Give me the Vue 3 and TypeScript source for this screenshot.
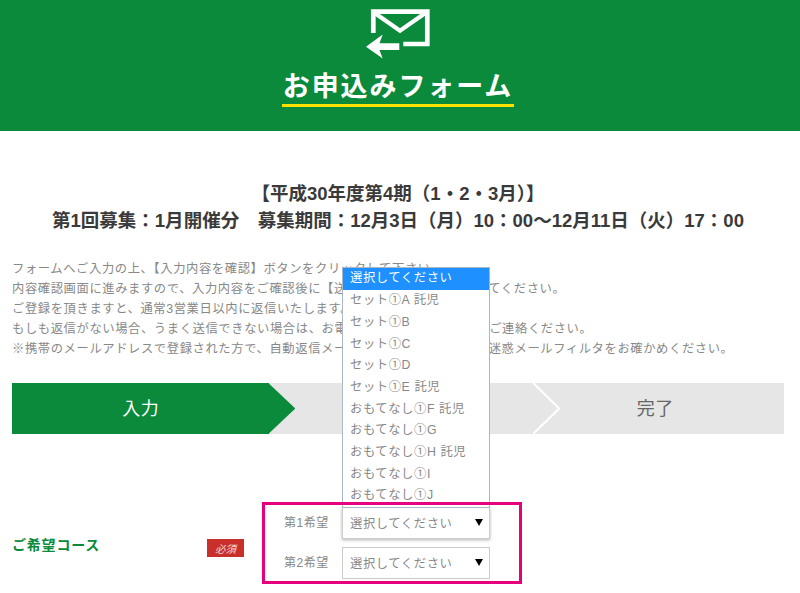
<script setup lang="ts">
const lines: string[] = [
  'フォームへご入力の上、【入力内容を確認】ボタンをクリックして下さい。',
  '内容確認画面に進みますので、入力内容をご確認後に【送信】ボタンをクリックしてください。',
  'ご登録を頂きますと、通常3営業日以内に返信いたします。',
  'もしも返信がない場合、うまく送信できない場合は、お電話またはメールなどにてご連絡ください。',
  '※携帯のメールアドレスで登録された方で、自動返信メールが届かない場合には、迷惑メールフィルタをお確かめください。',
]
const steps: string[] = ['入力', '確認', '完了']
const options: string[] = [
  '選択してください',
  'セット①A 託児',
  'セット①B',
  'セット①C',
  'セット①D',
  'セット①E 託児',
  'おもてなし①F 託児',
  'おもてなし①G',
  'おもてなし①H 託児',
  'おもてなし①I',
  'おもてなし①J',
]
</script>

<template>
  <div class="page">
    <header class="hero">
      <svg class="mail" viewBox="0 0 70 52" width="70" height="52" aria-hidden="true">
        <polyline points="8.3,25 8.3,3.7 62.3,3.7 62.3,36 38.3,36" fill="none" stroke="#fff" stroke-width="4.7" />
        <polyline points="10,5.3 35,22.7 60,5.3" fill="none" stroke="#fff" stroke-width="4.2" />
        <polygon points="1,38.7 17.7,26.5 14.5,35.3 34.3,35.3 34.3,42 14.5,42 17.7,50.5" fill="#fff" />
      </svg>
      <h1 class="hero-title">お申込みフォーム</h1>
    </header>

    <section class="notice">
      <p>【平成30年度第4期（1・2・3月）】</p>
      <p>第1回募集：1月開催分　募集期間：12月3日（月）10：00～12月11日（火）17：00</p>
    </section>

    <section class="intro">
      <p v-for="line in lines" :key="line">{{ line }}</p>
    </section>

    <ol class="steps">
      <li v-for="(step, i) in steps" :key="step" class="step" :class="{ active: i === 0, middle: i === 1 }">{{ step }}</li>
    </ol>

    <div class="form-row">
      <div class="course">ご希望コース</div>
      <span class="required">必須</span>
      <div class="choices">
        <div class="choice">
          <span class="choice-label">第1希望</span>
          <div class="select focused">
            <span>選択してください</span><i class="arrow"></i>
            <ul class="menu">
              <li v-for="(opt, i) in options" :key="opt" :class="{ selected: i === 0 }">{{ opt }}</li>
            </ul>
          </div>
        </div>
        <div class="choice">
          <span class="choice-label">第2希望</span>
          <div class="select">
            <span>選択してください</span><i class="arrow"></i>
          </div>
        </div>
      </div>
    </div>
  </div>
</template>

<style>
html, body { margin: 0; background: #fff; overflow: hidden; }
</style>

<style scoped>
.page {
  width: 800px;
  height: 593px;
  overflow: hidden;
  font-family: "Liberation Sans", "Noto Sans CJK JP", sans-serif;
  color: #888;
}
p, h1, ol, ul { margin: 0; padding: 0; list-style: none; }

.hero {
  height: 131px;
  box-sizing: border-box;
  padding-top: 8px;
  background: #0a8a3a;
  display: flex;
  flex-direction: column;
  align-items: center;
}
.mail { display: block; flex: none; }
.hero-title {
  margin: 7px 4px 0 0;
  padding: 0 1px;
  height: 37px;
  line-height: 41px;
  border-bottom: 3px solid #ffe100;
  color: #fff;
  font-size: 27px;
  font-weight: 700;
  letter-spacing: 1.9px;
  white-space: nowrap;
}

.notice {
  margin-top: 49px;
  padding-right: 4px;
  text-align: center;
  font-size: 18.5px;
  font-weight: 700;
  line-height: 27px;
  color: #3a3a3a;
}

.intro {
  margin-top: 25px;
  padding-left: 12px;
  font-size: 12.3px;
  letter-spacing: .6px;
  line-height: 20px;
  white-space: nowrap;
}

.steps {
  margin: 24px 16px 0 12px;
  height: 51px;
  display: flex;
  background: #e6e6e6;
}
.step {
  flex: 1;
  position: relative;
  display: flex;
  align-items: center;
  justify-content: center;
  padding-bottom: 3px;
  box-sizing: border-box;
  font-size: 18px;
  letter-spacing: .5px;
  color: #666;
}
.step.active { background: #0a8a3a; color: #fff; }
.step.active::after {
  content: "";
  position: absolute;
  top: 0;
  left: calc(100% - 1px);
  width: 27px;
  height: 100%;
  background: #0a8a3a;
  clip-path: polygon(0 0, 100% 50%, 0 100%);
}
.step.middle::after {
  content: "";
  position: absolute;
  top: 0;
  right: -34px;
  width: 28px;
  height: 100%;
  background: #fff;
  clip-path: polygon(0 0, 2px 0, 100% 50%, 2px 100%, 0 100%, 0 98%, 25px 50%, 0 2%);
}

.form-row {
  margin-top: 68px;
  padding-left: 12px;
  display: flex;
  align-items: center;
}
.course {
  width: 195px;
  font-size: 14px;
  font-weight: 700;
  letter-spacing: .8px;
  color: #0a8a3a;
  position: relative;
  top: 1px;
}
.required {
  width: 37px;
  height: 18px;
  background: #c9302c;
  color: #f4d6d6;
  font-size: 10.5px;
  font-style: italic;
  display: flex;
  align-items: center;
  justify-content: center;
  position: relative;
  top: 5px;
}
.choices {
  position: relative;
  margin-left: 18px;
  width: 260px;
  height: 82px;
  box-sizing: border-box;
  padding: 5px 32px 0 22px;
  display: flex;
  flex-direction: column;
  gap: 8px;
}
.choices::after {
  content: "";
  position: absolute;
  inset: 0;
  border: 3px solid #e6007e;
  box-sizing: border-box;
  pointer-events: none;
  z-index: 2;
}
.choice {
  display: flex;
  align-items: center;
  height: 32px;
}
.choice-label {
  width: 58px;
  font-size: 12px;
  letter-spacing: .5px;
  position: relative;
  top: -2px;
}
.select {
  position: relative;
  width: 148px;
  height: 32px;
  box-sizing: border-box;
  border: 1px solid #ccc;
  padding-left: 7px;
  display: flex;
  align-items: center;
  font-size: 12.3px;
  letter-spacing: .6px;
  background: #fff;
  color: #888;
}
.select.focused { box-shadow: 0 1px 3px rgba(0, 0, 0, .3); }
.arrow {
  position: absolute;
  right: 6px;
  top: 11px;
  width: 0;
  height: 0;
  border-left: 4.5px solid transparent;
  border-right: 4.5px solid transparent;
  border-top: 7px solid #000;
}
.menu {
  position: absolute;
  left: -1px;
  bottom: 100%;
  width: 148px;
  box-sizing: border-box;
  border: 1px solid #a9b6c4;
  background: #fff;
  z-index: 1;
}
.menu li {
  height: 21.7px;
  line-height: 21.7px;
  padding-left: 7px;
  white-space: nowrap;
}
.menu li.selected { background: #1e90ff; color: #fff; }
</style>
